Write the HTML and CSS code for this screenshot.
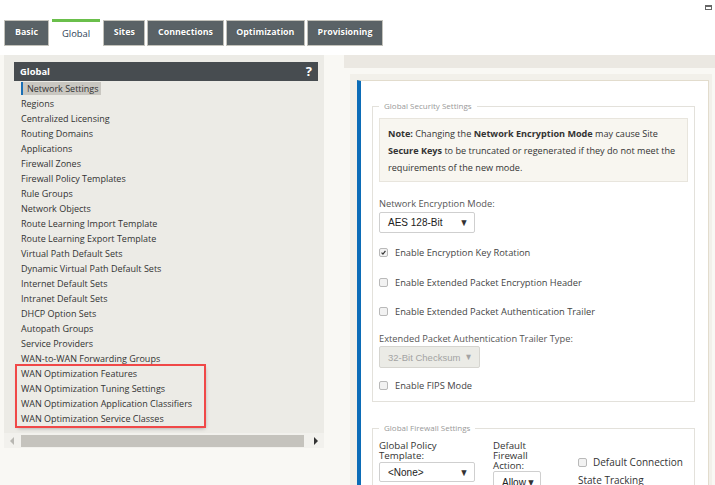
FILE: index.html
```html
<!DOCTYPE html>
<html lang="en">
<head>
<meta charset="utf-8">
<title>Global</title>
<link rel="stylesheet" href="styles.css">
</head>
<body>
<header class="topbar">
  <nav class="tabs">
    <span class="tab">Basic</span>
    <span class="tab active">Global</span>
    <span class="tab">Sites</span>
    <span class="tab">Connections</span>
    <span class="tab">Optimization</span>
    <span class="tab">Provisioning</span>
  </nav>
  <span class="corner-icon"></span>
</header>
<div class="main">
  <aside class="tree">
    <div class="tree-body">
      <div class="tree-head"><span>Global</span><span class="help">?</span></div>
      <ul class="tree-list">
        <li class="selected"><span>Network Settings</span></li>
        <li>Regions</li>
        <li>Centralized Licensing</li>
        <li>Routing Domains</li>
        <li>Applications</li>
        <li>Firewall Zones</li>
        <li>Firewall Policy Templates</li>
        <li>Rule Groups</li>
        <li>Network Objects</li>
        <li>Route Learning Import Template</li>
        <li>Route Learning Export Template</li>
        <li>Virtual Path Default Sets</li>
        <li>Dynamic Virtual Path Default Sets</li>
        <li>Internet Default Sets</li>
        <li>Intranet Default Sets</li>
        <li>DHCP Option Sets</li>
        <li>Autopath Groups</li>
        <li>Service Providers</li>
        <li>WAN-to-WAN Forwarding Groups</li>
        <li class="callout">
          <ul>
            <li>WAN Optimization Features</li>
            <li>WAN Optimization Tuning Settings</li>
            <li>WAN Optimization Application Classifiers</li>
            <li>WAN Optimization Service Classes</li>
          </ul>
        </li>
      </ul>
    </div>
    <div class="hscroll">
      <span class="arr arr-l"></span>
      <span class="thumb"></span>
      <span class="arr arr-r"></span>
    </div>
  </aside>
  <section class="content">
    <div class="band"></div>
    <div class="frame">
      <div class="card">
        <fieldset class="group sec">
          <legend>Global Security Settings</legend>
          <div class="note"><b>Note:</b> Changing the <b>Network Encryption Mode</b> may cause Site <b>Secure Keys</b> to be truncated or regenerated if they do not meet the requirements of the new mode.</div>
          <div class="field-label l-mode">Network Encryption Mode:</div>
          <div class="select s-mode"><span>AES 128-Bit</span><span class="caret">&#9660;</span></div>
          <div class="check c1"><span class="box on"><svg viewBox="0 0 9 9" width="9" height="9"><path d="M2 4.6 L3.8 6.5 L7 2.4" fill="none" stroke="#333" stroke-width="1.5"/></svg></span><span>Enable Encryption Key Rotation</span></div>
          <div class="check c2"><span class="box"></span><span>Enable Extended Packet Encryption Header</span></div>
          <div class="check c3"><span class="box"></span><span>Enable Extended Packet Authentication Trailer</span></div>
          <div class="field-label l-type">Extended Packet Authentication Trailer Type:</div>
          <div class="select s-type disabled"><span>32-Bit Checksum</span><span class="caret">&#9660;</span></div>
          <div class="check c4"><span class="box"></span><span>Enable FIPS Mode</span></div>
        </fieldset>
        <fieldset class="group fw">
          <legend>Global Firewall Settings</legend>
          <div class="fw-cols">
            <div class="fw-col col1">
              <div class="fw-label">Global Policy<br>Template:</div>
              <div class="select s-policy"><span>&lt;None&gt;</span><span class="caret">&#9660;</span></div>
            </div>
            <div class="fw-col col2">
              <div class="fw-label">Default<br>Firewall<br>Action:</div>
              <div class="select s-action"><span>Allow</span><span class="caret">&#9660;</span></div>
            </div>
            <div class="fw-col col3">
              <div class="check fw-check"><span class="box"></span><span>Default Connection</span></div>
              <div class="fw-sub">State Tracking</div>
            </div>
          </div>
        </fieldset>
      </div>
    </div>
  </section>
</div>
</body>
</html>
```
FILE: styles.css
```css
* { box-sizing: border-box; margin: 0; padding: 0; }
body {
  width: 715px; height: 485px; overflow: hidden;
  background: #f9f8f4;
  font-family: "Open Sans", "Noto Sans", sans-serif;
  color: #333;
}
ul { list-style: none; }

/* top tabs */
.topbar { position: relative; height: 55px; background: #fff; padding: 19px 0 0 4px; }
.tabs { display: flex; gap: 2px; align-items: flex-start; }
.tab {
  height: 26px; margin-top: 1px; padding: 0 9.6px;
  background: #5a6266; border: 1px solid #c3c2bb;
  color: #fff; font-weight: 700; font-size: 8.9px; line-height: 22px;
  text-shadow: 0 0 1px rgba(0,0,0,.4);
}
.tab:first-child { padding: 0 10px; }
.tab.active {
  height: 27px; margin: 0 1px; padding: 0 10px;
  background: #fff; border: none; border-top: 3px solid #6abf4b;
  color: #2d3e56; font-weight: 400; font-size: 9.4px; line-height: 24px; text-shadow: none;
}
.corner-icon {
  position: absolute; right: 3px; top: 5px; width: 7px; height: 5px;
  border: 1px solid #666; border-top-width: 2px; background: #fff;
}

/* main */
.main { display: flex; height: 430px; }
.tree { width: 320px; margin-left: 4px; height: 393px; display: flex; flex-direction: column; }
.tree-body { flex: 1; background: #ecebe6; padding: 7px 6px 0 10px; }
.tree-head {
  height: 19px; background: #474c50; color: #fff;
  display: flex; justify-content: space-between; align-items: center;
  padding: 0 6px 0 6px; font-weight: 700; font-size: 9.4px;
}
.tree-head .help { font-size: 13px; line-height: 19px; }
.tree-list { padding-left: 7px; font-size: 9px; line-height: 15px; color: #333; }
.tree-list li { white-space: nowrap; }
.tree-list .selected span {
  display: inline-block; line-height: 13px; vertical-align: top; margin-top: 1px;
  background: #c9c7c1; border-left: 2px solid #1a6fb5; padding: 0 2px 0 4px;
}
.callout {
  margin-left: -4px; padding-left: 4px; width: 187px;
  outline: 2.5px solid #f04848;
  box-shadow: 1px 2px 4px rgba(0,0,0,.35);
}
.hscroll { height: 15px; background: #f2f1ed; display: flex; align-items: center; padding: 0 6px 0 6px; }
.arr { width: 0; height: 0; border-top: 4px solid transparent; border-bottom: 4px solid transparent; }
.arr-l { border-right: 4px solid #b8b7b2; }
.arr-r { border-left: 4px solid #333; }
.thumb { height: 12px; background: #c5c3bd; margin: 0 10px 0 7px; flex: 1; }

/* content */
.content { flex: 1; margin-left: 20px; }
.band { height: 13px; background: #ebe8e2; }
.frame { margin: 6px 3px 0 6px; background: #f2f0ea; padding: 6px 3px 0 7px; height: 420px; }
.card {
  background: #fff; height: 420px;
  border: 1px solid #e2dccd; border-left: 4px solid #0c6cb7;
  padding: 20px 13px 0 11px;
}
.group { border: 1px solid #e3e1db; padding: 0 6px 9px; }
.group legend { padding: 0 5px; font-size: 8px; line-height: 10px; color: #999; }
.note {
  margin-top: 7px; background: #f8f6f0; border: 1px solid #e8e5dd;
  padding: 6px 8px 5px; font-size: 9.1px; line-height: 17px; color: #333;
}
.note b { font-weight: 700; }
.field-label { font-size: 9.3px; line-height: 12px; color: #555; }
.l-mode { margin-top: 16px; }
.l-type { margin-top: 15px; }
.select {
  display: flex; justify-content: space-between; align-items: center;
  border: 1px solid #cfcfcf; background: #fff; border-radius: 2px;
  font-family: "Liberation Sans", Arial, sans-serif; font-size: 10px; color: #222;
  padding: 0 5px 0 8px; white-space: nowrap;
}
.select .caret { font-size: 10px; color: #333; transform: scaleX(0.9); }
.s-mode { width: 96px; height: 21px; margin-top: 2px; }
.s-type {
  width: 101px; height: 22px; margin-top: 1px; padding: 0 6px 0 8px;
  background: #ebebe6; color: #a3a3a3; border-color: #d6d5d0; font-size: 9.5px;
}
.s-type .caret { color: #a3a3a3; font-size: 9px; }
.check { display: flex; align-items: center; gap: 7px; height: 14px; font-size: 9.3px; color: #444; }
.box {
  width: 9px; height: 9px; border: 1px solid #b9b9b9; border-radius: 2px; background: #f2f2f2;
  display: flex; align-items: center; justify-content: center; flex: none;
}
.box svg { display: block; }
.c1 { margin-top: 12px; }
.c2 { margin-top: 16px; }
.c3 { margin-top: 15px; }
.c4 { margin-top: 10px; }

.fw { margin-top: 21px; padding-bottom: 30px; }
.fw-cols { display: flex; margin-top: 8px; }
.fw-col { flex: none; }
.col1 { width: 114px; }
.col2 { width: 85px; }
.fw-label { font-size: 9.7px; line-height: 10px; color: #333; }
.s-policy { width: 96px; height: 20px; margin-top: 1px; }
.s-action { width: 48px; height: 22px; margin-top: 0; }
.fw-check { margin-top: 14px; font-size: 10px; color: #333; gap: 6px; }
.fw-sub { margin-top: 4px; font-size: 10px; color: #333; }
```
